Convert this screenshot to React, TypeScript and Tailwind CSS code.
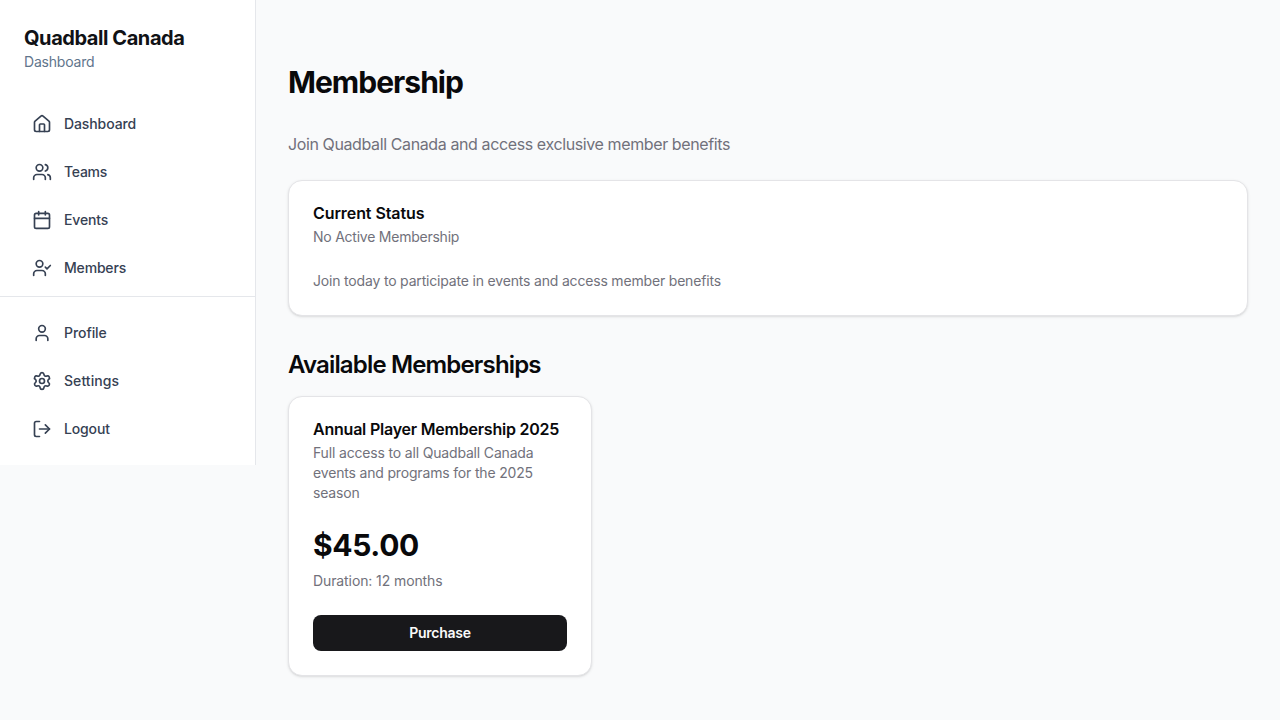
import { Home, Users, Calendar, UserCheck, User, Settings, LogOut, type LucideIcon } from "lucide-react";

type NavEntry = { label: string; icon: LucideIcon; tracking: string };

const mainNav: NavEntry[] = [
  { label: "Dashboard", icon: Home, tracking: "tracking-[-0.1px]" },
  { label: "Teams", icon: Users, tracking: "tracking-[-0.25px]" },
  { label: "Events", icon: Calendar, tracking: "tracking-[-0.15px]" },
  { label: "Members", icon: UserCheck, tracking: "tracking-[-0.18px]" },
];

const accountNav: NavEntry[] = [
  { label: "Profile", icon: User, tracking: "tracking-[-0.07px]" },
  { label: "Settings", icon: Settings, tracking: "tracking-[0.06px]" },
  { label: "Logout", icon: LogOut, tracking: "tracking-[-0.15px]" },
];

function NavItem({ label, icon: Icon, tracking }: NavEntry) {
  return (
    <a className="flex h-10 items-center gap-3 rounded-md px-2 text-sm font-medium text-[#364153]">
      <Icon className="size-5" />
      <span className={tracking}>{label}</span>
    </a>
  );
}

export default function App() {
  return (
    <div className="flex min-h-screen items-start bg-[#f9fafb] font-['Inter',sans-serif] text-[#09090b]">
      <aside className="h-[465px] w-64 shrink-0 border-r border-gray-200 bg-white">
        <div className="p-6">
          <h1 className="text-xl leading-7 font-bold tracking-[-0.43px] text-[#101216]">Quadball Canada</h1>
          <p className="text-sm tracking-[-0.2px] text-[#5f758c]">Dashboard</p>
        </div>
        <nav className="flex h-[201px] flex-col gap-2 border-b border-gray-200 px-6 pt-2">
          {mainNav.map((n) => (
            <NavItem key={n.label} {...n} />
          ))}
        </nav>
        <nav className="flex flex-col gap-2 px-6 pt-4">
          {accountNav.map((n) => (
            <NavItem key={n.label} {...n} />
          ))}
        </nav>
      </aside>
      <main className="flex-1 px-8 pt-16">
        <h2 className="text-[30px] leading-9 font-bold tracking-[-0.98px]">Membership</h2>
        <p className="mt-8 text-base tracking-[-0.39px] text-[#71717b]">
          Join Quadball Canada and access exclusive member benefits
        </p>
        <section className="mt-6 h-[136px] rounded-[14px] border border-zinc-200 bg-white p-6 shadow-sm">
          <h3 className="text-base leading-4 font-semibold tracking-[-0.08px]">Current Status</h3>
          <p className="mt-1.5 text-sm tracking-[-0.24px] text-[#71717b]">No Active Membership</p>
          <p className="mt-6 text-sm tracking-[-0.18px] text-[#71717b]">
            Join today to participate in events and access member benefits
          </p>
        </section>
        <h2 className="mt-[33px] text-2xl font-semibold tracking-[-0.84px]">Available Memberships</h2>
        <section className="mt-[15px] h-[280px] w-[304px] rounded-[14px] border border-zinc-200 bg-white p-6 shadow-sm">
          <h3 className="text-base leading-4 font-semibold tracking-[-0.22px]">Annual Player Membership 2025</h3>
          <p className="mt-1.5 text-sm tracking-[-0.17px] text-[#71717b]">
            Full access to all Quadball Canada events and programs for the 2025 season
          </p>
          <p className="mt-6 text-[30px] leading-9 font-bold tracking-[-0.35px]">$45.00</p>
          <p className="mt-2 text-sm tracking-[-0.1px] text-[#71717b]">Duration: 12 months</p>
          <button className="mt-6 h-9 w-full rounded-lg bg-[#18181b] text-sm font-semibold tracking-[-0.25px] text-[#fafafa]">
            Purchase
          </button>
        </section>
      </main>
    </div>
  );
}
